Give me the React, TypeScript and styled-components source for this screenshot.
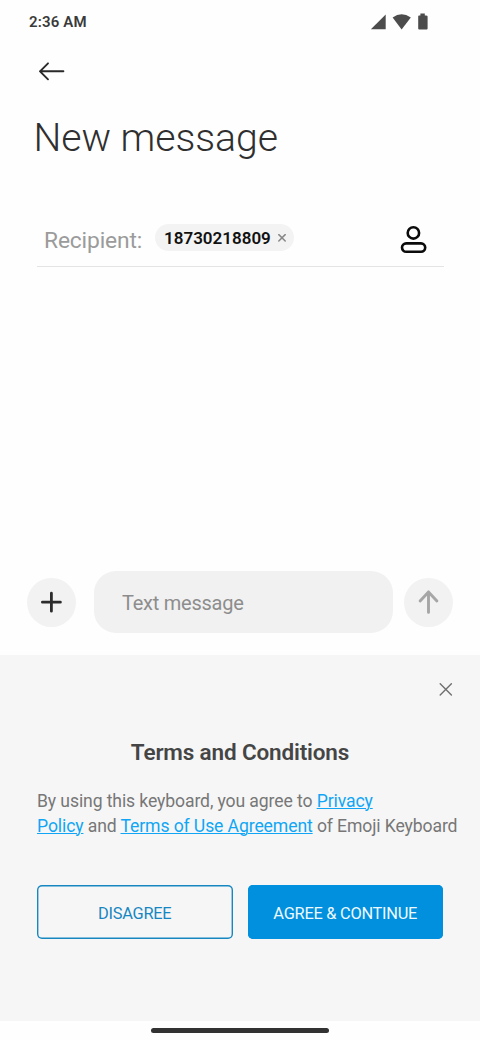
import React from 'react';
import styled, { createGlobalStyle } from 'styled-components';

const GlobalStyle = createGlobalStyle`
  *, *::before, *::after { box-sizing: border-box; }
  body { margin: 0; background: #fefefe; font-family: Roboto, sans-serif; }
  button, input { font-family: inherit; }
`;

const Screen = styled.div`
  display: flex;
  flex-direction: column;
  width: 480px;
  height: 1040px;
  overflow: hidden;
  background: #fefefe;
`;

const StatusBar = styled.header`
  display: flex;
  align-items: center;
  justify-content: space-between;
  height: 44px;
  padding: 0 50.5px 0 29px;
`;

const Clock = styled.time`
  font-size: 15px;
  line-height: 20px;
  font-weight: 600;
  letter-spacing: 0.15px;
  color: #3a3a3a;
`;

const StatusIcons = styled.svg`
  display: block;
  width: 60px;
  height: 20px;
  fill: #4c4c4c;
`;

const Glyph = styled.svg`
  display: block;
  fill: none;
  stroke-linecap: round;
  stroke-linejoin: round;
`;

const IconButton = styled.button`
  display: flex;
  align-items: center;
  justify-content: center;
  padding: 0;
  border: 0;
  background: none;
`;

const NavBar = styled.nav`
  display: flex;
  height: 54px;
  padding-left: 36px;
`;

const Title = styled.h1`
  margin: 16px 0 0 33.5px;
  font-size: 39.2px;
  line-height: 48px;
  font-weight: 300;
  letter-spacing: -0.05px;
  color: #2f2f2f;
`;

const RecipientRow = styled.div`
  display: flex;
  align-items: flex-start;
  height: 57px;
  margin: 48px 36px 0 37px;
  padding-left: 7px;
  border-bottom: 1px solid #e4e4e4;
`;

const RecipientLabel = styled.span`
  width: 111px;
  margin-top: 16px;
  font-size: 22.8px;
  line-height: 30px;
  letter-spacing: -0.15px;
  color: #9b9b9b;
`;

const Chip = styled.div`
  display: flex;
  align-items: center;
  justify-content: space-between;
  width: 139px;
  height: 27px;
  margin-top: 14px;
  padding: 0 8px 0 9px;
  border-radius: 14px;
  background: #f3f3f3;
`;

const ChipNumber = styled.span`
  padding-top: 1px;
  font-size: 17px;
  line-height: 27px;
  font-weight: 600;
  color: #111;
`;

const ContactButton = styled(IconButton)`
  margin: 15px 16px 0 auto;
`;

const Composer = styled.div`
  display: flex;
  align-items: center;
  height: 62px;
  margin-top: auto;
  padding: 0 27px;
`;

const RoundButton = styled(IconButton)`
  width: 49px;
  height: 49px;
  flex: none;
  border-radius: 50%;
  background: #f2f2f2;
`;

const MessageField = styled.div`
  flex: 1;
  height: 62px;
  margin: 0 11px 0 18px;
  padding: 2px 28px 0;
  border-radius: 22px;
  background: #f1f1f1;
  font-size: 20px;
  line-height: 60px;
  letter-spacing: -0.25px;
  color: #8d8d8d;
`;

const Sheet = styled.section`
  display: flex;
  flex-direction: column;
  height: 366px;
  margin-top: 22px;
  padding: 0 0 0 37px;
  background: #f6f6f6;
`;

const CloseButton = styled(IconButton)`
  align-self: flex-end;
  margin: 24px 24px 0 0;
`;

const SheetTitle = styled.h2`
  margin: 38px 37px 0 0;
  font-size: 22.5px;
  line-height: 30px;
  font-weight: 600;
  letter-spacing: -0.15px;
  text-align: center;
  color: #454545;
`;

const Terms = styled.p`
  margin: 22px 0 0;
  font-size: 17.6px;
  line-height: 24.5px;
  letter-spacing: -0.11px;
  white-space: nowrap;
  color: #777;
`;

const TermsLink = styled.a`
  color: #10a6f5;
  text-decoration: underline;
  text-decoration-thickness: 1px;
  text-underline-offset: 1px;
`;

const Actions = styled.div`
  display: grid;
  grid-template-columns: 1fr 1fr;
  gap: 15px;
  margin: 47px 37px 0 0;
`;

const ActionButton = styled.button<{ $primary?: boolean }>`
  height: 54px;
  padding: 3px 0 0;
  border: 0;
  box-shadow: inset 0 0 0 1.4px ${(p) => (p.$primary ? '#0090de' : '#1787c2')};
  border-radius: 5px;
  background: ${(p) => (p.$primary ? '#0090de' : 'transparent')};
  color: ${(p) => (p.$primary ? '#eef9ff' : '#1787c2')};
  font-size: 16.4px;
  line-height: 24px;
  letter-spacing: -0.27px;
  white-space: nowrap;
`;

const HomeArea = styled.footer`
  display: flex;
  justify-content: center;
  height: 19px;
  padding-top: 7px;
`;

const HomeBar = styled.div`
  width: 178px;
  height: 5px;
  border-radius: 3px;
  background: #323232;
`;

export default function App() {
  return (
    <>
      <GlobalStyle />
      <Screen>
        <StatusBar>
          <Clock>2:36 AM</Clock>
          <StatusIcons viewBox="0 0 60 20">
            <path d="M.9 17.3 15.7 2.5v14.8z" />
            <path d="M22.6 5.5Q31.6-.9 40.8 5.5L31.6 17.6z" />
            <path d="M49 3.4h1.4V1.5h4.4v1.9H56q1.6 0 1.6 1v12q0 1-1 1h-7.4q-1 0-1-1v-12q0-1 .8-1z" />
          </StatusIcons>
        </StatusBar>
        <NavBar>
          <IconButton aria-label="Back">
            <Glyph width="32" height="24" viewBox="0 0 32 24" stroke="#292929" strokeWidth="1.9">
              <path d="M27.4 12.3H4M12 4.3l-8 8 8 8" />
            </Glyph>
          </IconButton>
        </NavBar>
        <Title>New message</Title>
        <RecipientRow>
          <RecipientLabel>Recipient:</RecipientLabel>
          <Chip>
            <ChipNumber>18730218809</ChipNumber>
            <Glyph width="8" height="8" viewBox="0 0 8 8" stroke="#888" strokeWidth="1.5">
              <path d="m.8.6 6.4 6.4M7.2.6.8 7" />
            </Glyph>
          </Chip>
          <ContactButton aria-label="Choose contact">
            <Glyph width="28" height="30" viewBox="0 0 28 30" stroke="#0b0b0b" strokeWidth="2.6">
              <circle cx="13.4" cy="7.9" r="5.7" />
              <rect x="2" y="18.4" width="23.2" height="8.4" rx="4.2" />
            </Glyph>
          </ContactButton>
        </RecipientRow>
        <Composer>
          <RoundButton aria-label="Add attachment">
            <Glyph width="24" height="24" viewBox="0 0 24 24" stroke="#2c2c2c" strokeWidth="2.8">
              <path d="M11.4 3.2v18M2.4 12.2h18" />
            </Glyph>
          </RoundButton>
          <MessageField>Text message</MessageField>
          <RoundButton aria-label="Send">
            <Glyph width="24" height="26" viewBox="0 0 24 26" stroke="#a6a6a6" strokeWidth="2.9">
              <path d="M11.5 23.4V3M3.1 12 11.5 3l8.4 9" />
            </Glyph>
          </RoundButton>
        </Composer>
        <Sheet>
          <CloseButton aria-label="Close">
            <Glyph width="20" height="20" viewBox="0 0 20 20" stroke="#707070" strokeWidth="1.4">
              <path d="m4.2 4.8 11.2 11.2M15.4 4.8 4.2 16" />
            </Glyph>
          </CloseButton>
          <SheetTitle>Terms and Conditions</SheetTitle>
          <Terms>
            By using this keyboard, you agree to <TermsLink>Privacy</TermsLink>
            <br />
            <TermsLink>Policy</TermsLink> and <TermsLink>Terms of Use Agreement</TermsLink> of Emoji Keyboard
          </Terms>
          <Actions>
            <ActionButton>DISAGREE</ActionButton>
            <ActionButton $primary>AGREE &amp; CONTINUE</ActionButton>
          </Actions>
        </Sheet>
        <HomeArea>
          <HomeBar />
        </HomeArea>
      </Screen>
    </>
  );
}
